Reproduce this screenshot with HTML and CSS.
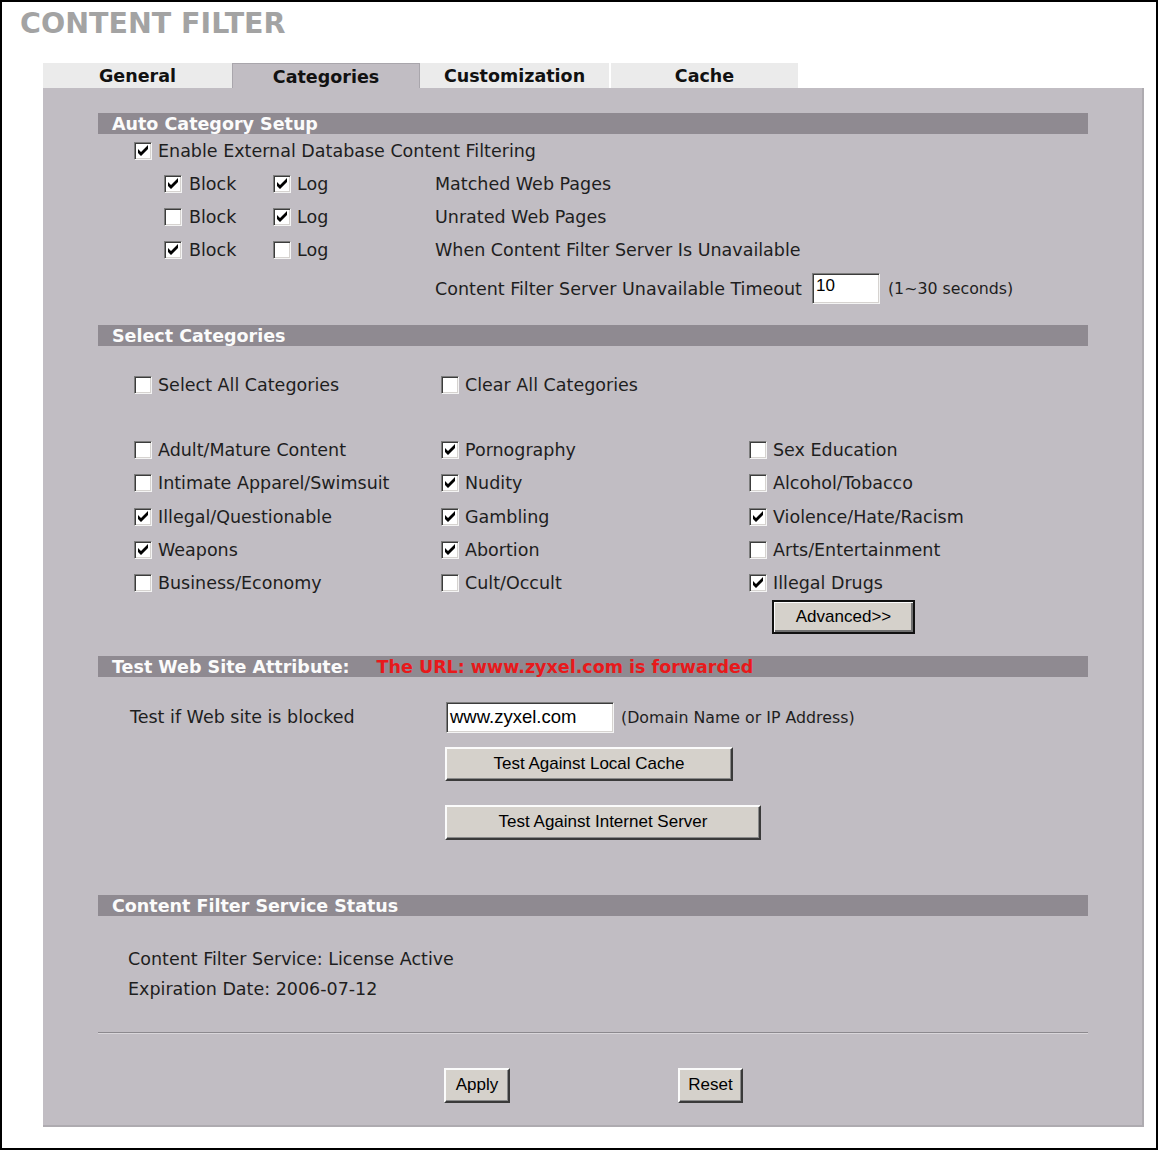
FILE: index.html
```html
<!DOCTYPE html>
<html>
<head>
<meta charset="utf-8">
<title>Content Filter</title>
<link rel="stylesheet" href="styles.css">
</head>
<body>
<div class="frame">
  <div class="title">CONTENT FILTER</div>
  <div class="tabs">
    <div class="tab tab-general">General</div>
    <div class="tab tab-active">Categories</div>
    <div class="tab tab-custom">Customization</div>
    <div class="tab tab-cache">Cache</div>
  </div>
  <div class="panel">
    <div class="hdr hdr-auto">Auto Category Setup</div>
    <div class="row row-enable">
      <span class="cb on"><svg viewBox="0 0 16 16"><polygon points="3,6 6,9 13,2 13,6 6,13 3,10"/></svg></span>
      <span class="lbl">Enable External Database Content Filtering</span>
    </div>
    <div class="row row-opt">
      <div class="cell-block"><span class="cb on"><svg viewBox="0 0 16 16"><polygon points="3,6 6,9 13,2 13,6 6,13 3,10"/></svg></span><span class="lbl lbl-b">Block</span></div>
      <div class="cell-log"><span class="cb on"><svg viewBox="0 0 16 16"><polygon points="3,6 6,9 13,2 13,6 6,13 3,10"/></svg></span><span class="lbl">Log</span></div>
      <div class="cell-desc">Matched Web Pages</div>
    </div>
    <div class="row row-opt">
      <div class="cell-block"><span class="cb"></span><span class="lbl lbl-b">Block</span></div>
      <div class="cell-log"><span class="cb on"><svg viewBox="0 0 16 16"><polygon points="3,6 6,9 13,2 13,6 6,13 3,10"/></svg></span><span class="lbl">Log</span></div>
      <div class="cell-desc">Unrated Web Pages</div>
    </div>
    <div class="row row-opt">
      <div class="cell-block"><span class="cb on"><svg viewBox="0 0 16 16"><polygon points="3,6 6,9 13,2 13,6 6,13 3,10"/></svg></span><span class="lbl lbl-b">Block</span></div>
      <div class="cell-log"><span class="cb"></span><span class="lbl">Log</span></div>
      <div class="cell-desc">When Content Filter Server Is Unavailable</div>
    </div>
    <div class="row row-timeout">
      <span>Content Filter Server Unavailable Timeout</span>
      <span class="field field-timeout">10</span>
      <span class="small small-sec">(1~30 seconds)</span>
    </div>

    <div class="hdr hdr-select">Select Categories</div>
    <div class="grid grid-all">
      <div class="item"><span class="cb"></span><span class="lbl">Select All Categories</span></div>
      <div class="item"><span class="cb"></span><span class="lbl">Clear All Categories</span></div>
    </div>
    <div class="grid grid-cats">
      <div class="item"><span class="cb"></span><span class="lbl">Adult/Mature Content</span></div>
      <div class="item"><span class="cb on"><svg viewBox="0 0 16 16"><polygon points="3,6 6,9 13,2 13,6 6,13 3,10"/></svg></span><span class="lbl">Pornography</span></div>
      <div class="item"><span class="cb"></span><span class="lbl">Sex Education</span></div>

      <div class="item"><span class="cb"></span><span class="lbl">Intimate Apparel/Swimsuit</span></div>
      <div class="item"><span class="cb on"><svg viewBox="0 0 16 16"><polygon points="3,6 6,9 13,2 13,6 6,13 3,10"/></svg></span><span class="lbl">Nudity</span></div>
      <div class="item"><span class="cb"></span><span class="lbl">Alcohol/Tobacco</span></div>

      <div class="item"><span class="cb on"><svg viewBox="0 0 16 16"><polygon points="3,6 6,9 13,2 13,6 6,13 3,10"/></svg></span><span class="lbl">Illegal/Questionable</span></div>
      <div class="item"><span class="cb on"><svg viewBox="0 0 16 16"><polygon points="3,6 6,9 13,2 13,6 6,13 3,10"/></svg></span><span class="lbl">Gambling</span></div>
      <div class="item"><span class="cb on"><svg viewBox="0 0 16 16"><polygon points="3,6 6,9 13,2 13,6 6,13 3,10"/></svg></span><span class="lbl">Violence/Hate/Racism</span></div>

      <div class="item"><span class="cb on"><svg viewBox="0 0 16 16"><polygon points="3,6 6,9 13,2 13,6 6,13 3,10"/></svg></span><span class="lbl">Weapons</span></div>
      <div class="item"><span class="cb on"><svg viewBox="0 0 16 16"><polygon points="3,6 6,9 13,2 13,6 6,13 3,10"/></svg></span><span class="lbl">Abortion</span></div>
      <div class="item"><span class="cb"></span><span class="lbl">Arts/Entertainment</span></div>

      <div class="item"><span class="cb"></span><span class="lbl">Business/Economy</span></div>
      <div class="item"><span class="cb"></span><span class="lbl">Cult/Occult</span></div>
      <div class="item"><span class="cb on"><svg viewBox="0 0 16 16"><polygon points="3,6 6,9 13,2 13,6 6,13 3,10"/></svg></span><span class="lbl">Illegal Drugs</span></div>

      <div class="adv-cell"><span class="btn btn-default btn-adv">Advanced&gt;&gt;</span></div>
    </div>

    <div class="hdr hdr-test">Test Web Site Attribute:<span class="red">The URL: www.zyxel.com is forwarded</span></div>
    <div class="row row-test">
      <span class="test-lbl">Test if Web site is blocked</span>
      <span class="field field-url">www.zyxel.com</span>
      <span class="small small-dom">(Domain Name or IP Address)</span>
    </div>
    <div class="btn-line line-cache"><span class="btn btn-cache">Test Against Local Cache</span></div>
    <div class="btn-line line-server"><span class="btn btn-server">Test Against Internet Server</span></div>

    <div class="hdr hdr-status">Content Filter Service Status</div>
    <div class="status">
      <div class="status-line">Content Filter Service: License Active</div>
      <div class="status-line">Expiration Date: 2006-07-12</div>
    </div>
    <div class="sep"></div>
    <div class="actions">
      <span class="btn btn-apply">Apply</span>
      <span class="btn btn-reset">Reset</span>
    </div>
  </div>
</div>
</body>
</html>
```

FILE: styles.css
```css
html, body {
  margin: 0;
  padding: 0;
  background: #ffffff;
}
body {
  font-family: "DejaVu Sans", Verdana, sans-serif;
  font-size: 17.5px;
  color: #1e1e1e;
}
.frame {
  box-sizing: border-box;
  width: 1158px;
  height: 1150px;
  border: 2px solid #000;
  background: #fff;
}
.title {
  margin: 5px 0 0 18px;
  height: 56px;
  line-height: 34px;
  font-size: 28.5px;
  font-weight: bold;
  color: #a3a3a3;
}
.tabs {
  display: flex;
  margin-left: 41px;
  height: 25px;
}
.tab {
  box-sizing: border-box;
  height: 25px;
  line-height: 26px;
  text-align: center;
  font-weight: bold;
  font-size: 17.5px;
  color: #111;
  background: #ebebeb;
}
.tab-general { width: 189px; }
.tab-active {
  width: 188px;
  background: #c1bdc3;
  border: 1px solid #a9a6ac;
  border-bottom: none;
}
.tab-custom { width: 189px; }
.tab-cache { width: 187px; margin-left: 2px; }

.panel {
  box-sizing: border-box;
  margin-left: 41px;
  width: 1101px;
  height: 1039px;
  background: #c1bdc3;
  border-right: 2px solid #aeabb0;
  border-bottom: 2px solid #aeabb0;
  padding: 25px 0 0 55px;
}
.hdr {
  width: 990px;
  height: 21px;
  line-height: 22px;
  background: #8f8a91;
  color: #fbfbfb;
  font-weight: bold;
  padding-left: 14px;
  box-sizing: border-box;
  white-space: nowrap;
}
.red {
  color: #e8191b;
  margin-left: 27px;
}
.row {
  display: flex;
  align-items: center;
  white-space: nowrap;
}
.row-enable {
  height: 33px;
  padding-left: 36px;
}
.lbl { margin-left: 6px; white-space: nowrap; }
.lbl-b { margin-left: 7px; }
.row-opt {
  height: 33.3px;
  padding-left: 66px;
}
.cell-block { width: 109px; display: flex; align-items: center; }
.cell-log { width: 162px; display: flex; align-items: center; }
.row-timeout {
  height: 44px;
  padding-left: 337px;
}
.cb {
  box-sizing: border-box;
  display: inline-block;
  flex: none;
  width: 18px;
  height: 18px;
  background: #fff;
  border-top: 1px solid #7d7d7d;
  border-left: 1px solid #7d7d7d;
  border-bottom: 1px solid #f4f4f4;
  border-right: 1px solid #f4f4f4;
  box-shadow: inset 1px 1px 0 #3c3c3c, inset -1px -1px 0 #d6d3d0;
}
.cb svg {
  display: block;
  width: 16px;
  height: 16px;
  fill: #000;
}
.field {
  box-sizing: border-box;
  display: inline-block;
  background: #fff;
  font-family: "Liberation Sans", Arial, sans-serif;
  font-size: 17px;
  color: #000;
  border-top: 1px solid #7d7d7d;
  border-left: 1px solid #7d7d7d;
  border-bottom: 1px solid #f4f4f4;
  border-right: 1px solid #f4f4f4;
  box-shadow: inset 1px 1px 0 #3c3c3c, inset -1px -1px 0 #d6d3d0;
}
.field-timeout {
  width: 68px;
  height: 31px;
  margin-left: 10px;
  padding: 2px 0 0 3px;
  line-height: 20px;
}
.small {
  font-size: 15.8px;
}
.small-sec { margin-left: 8px; }

.hdr-select { margin-top: 14px; }
.grid {
  display: grid;
  grid-template-columns: 307px 308px 1fr;
  padding-left: 36px;
  white-space: nowrap;
}
.grid-all {
  margin-top: 22px;
  height: 34px;
  align-items: center;
}
.grid-cats {
  margin-top: 31.5px;
  grid-auto-rows: 33.25px;
  align-items: center;
}
.item {
  display: flex;
  align-items: center;
}
.adv-cell {
  grid-column: 3;
  align-self: start;
  padding-left: 23px;
  height: 34px;
}
.btn {
  box-sizing: border-box;
  display: inline-flex;
  align-items: center;
  justify-content: center;
  background: #d5d1cb;
  font-family: "Liberation Sans", Arial, sans-serif;
  font-size: 17px;
  color: #000;
  border-top: 2px solid #fbfbfb;
  border-left: 2px solid #fbfbfb;
  border-right: 2px solid #3a3a3a;
  border-bottom: 2px solid #3a3a3a;
  box-shadow: inset -1px -1px 0 #8a8a8a;
  white-space: nowrap;
}
.btn-default {
  border: 2px solid #111;
  box-shadow: inset 1px 1px 0 #fbfbfb, inset -2px -2px 0 #707070;
}
.btn-adv {
  width: 143px;
  height: 34px;
}

.hdr-test { margin-top: 23px; }
.row-test {
  margin-top: 25px;
  height: 31px;
  padding-left: 32px;
}
.test-lbl { width: 316px; }
.field-url {
  width: 168px;
  height: 31px;
  padding: 3px 0 0 3px;
  line-height: 21px;
  font-size: 18.5px;
}
.small-dom { margin-left: 7px; }
.btn-line { padding-left: 347px; }
.line-cache { margin-top: 14px; }
.line-server { margin-top: 24px; }
.btn-cache { width: 288px; height: 34px; }
.btn-server { width: 316px; height: 35px; }

.hdr-status { margin-top: 55px; }
.status {
  margin-top: 28px;
  padding-left: 30px;
}
.status-line {
  height: 30px;
  line-height: 30px;
}
.sep {
  margin-top: 28px;
  width: 990px;
  height: 1px;
  background: #8c898e;
  border-bottom: 1px solid #d9d6da;
}
.actions {
  margin-top: 34px;
  padding-left: 346px;
  display: flex;
}
.btn-apply { width: 66px; height: 35px; }
.btn-reset { width: 65px; height: 35px; margin-left: 168px; }
```
